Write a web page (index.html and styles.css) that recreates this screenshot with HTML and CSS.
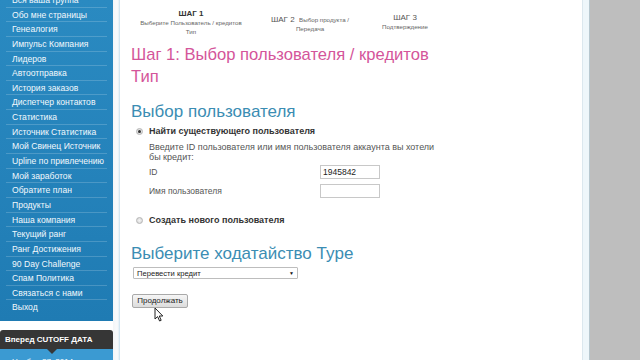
FILE: index.html
```html
<!DOCTYPE html>
<html lang="ru">
<head>
<meta charset="utf-8">
<title>Шаг 1</title>
<link rel="stylesheet" href="styles.css">
</head>
<body>
<div class="page">
  <aside class="side">
    <ul class="menu">
      <li>Вся ваша группа</li>
      <li>Обо мне страницы</li>
      <li>Генеалогия</li>
      <li>Импульс Компания</li>
      <li>Лидеров</li>
      <li>Автоотправка</li>
      <li>История заказов</li>
      <li>Диспетчер контактов</li>
      <li>Статистика</li>
      <li>Источник Статистика</li>
      <li>Мой Свинец Источник</li>
      <li>Upline по привлечению</li>
      <li>Мой заработок</li>
      <li>Обратите план</li>
      <li>Продукты</li>
      <li>Наша компания</li>
      <li>Текущий ранг</li>
      <li>Ранг Достижения</li>
      <li>90 Day Challenge</li>
      <li>Спам Политика</li>
      <li>Связаться с нами</li>
      <li class="last">Выход</li>
    </ul>
    <div class="cutoff">
      <div class="cutoff-head">Вперед CUTOFF ДАТА</div>
      <div class="cutoff-body">Ноябрь 27, 2014</div>
    </div>
  </aside>
  <div class="gutter"></div>
  <main class="main">
    <div class="steps">
      <div class="step step1">
        <div class="step-title">ШАГ 1</div>
        <div class="step-sub">Выберите Пользователь / кредитов<br>Тип</div>
      </div>
      <div class="step step2">
        <div class="step-line"><span class="step-num">ШАГ 2</span> <span class="step-sub">Выбор продукта /</span></div>
        <div class="step-sub">Передача</div>
      </div>
      <div class="step step3">
        <div class="step-num">ШАГ 3</div>
        <div class="step-sub">Подтверждение</div>
      </div>
    </div>

    <h1 class="title">Шаг 1: Выбор пользователя / кредитов<br>Тип</h1>

    <h2 class="section">Выбор пользователя</h2>
    <div class="radio-row">
      <span class="radio checked"></span>
      <span class="radio-label">Найти существующего пользователя</span>
    </div>
    <div class="sub-block">
      <p class="hint">Введите ID пользователя или имя пользователя аккаунта вы хотели<br>бы кредит:</p>
      <div class="field">
        <span class="field-label">ID</span>
        <span class="input">1945842</span>
      </div>
      <div class="field">
        <span class="field-label">Имя пользователя</span>
        <span class="input"></span>
      </div>
    </div>
    <div class="radio-row second">
      <span class="radio"></span>
      <span class="radio-label">Создать нового пользователя</span>
    </div>

    <h2 class="section section2">Выберите ходатайство Type</h2>
    <div class="select"><span>Перевести кредит</span><span class="arrow">▼</span></div>
    <div class="btn">Продолжать</div>

    <svg class="cursor" width="10" height="15" viewBox="0 0 10 15">
      <path d="M1 1 L1 12 L3.6 9.6 L5.6 14 L7.2 13.3 L5.3 9 L8.8 9 Z" fill="#fff" stroke="#222" stroke-width="1" stroke-linejoin="round"/>
    </svg>
  </main>
  <div class="edge"></div>
  <div class="rail"></div>
</div>
</body>
</html>
```

FILE: styles.css
```css
* { box-sizing: border-box; }
html, body { margin: 0; padding: 0; }
body {
  width: 640px;
  height: 360px;
  overflow: hidden;
  background: #fff;
  font-family: "Liberation Sans", Arial, sans-serif;
}
.page {
  display: flex;
  height: 360px;
}
.side {
  width: 113px;
  flex: none;
  display: flex;
  flex-direction: column;
  overflow: hidden;
}
.menu {
  flex: none;
  list-style: none;
  margin: 0;
  padding: 0 6px 0 6px;
  height: 321px;
  background: linear-gradient(180deg, #2a8ac1 0%, #2583bb 50%, #1f7bb3 100%);
  overflow: hidden;
}
.menu li {
  height: 14.65px;
  line-height: 14px;
  font-size: 8.6px;
  color: #f2f8fc;
  padding-left: 6px;
  border-bottom: 1px solid rgba(255,255,255,0.18);
  white-space: nowrap;
}
.menu li:first-child { margin-top: -7px; }
.menu li.last { border-bottom: none; }
.cutoff {
  flex: none;
  margin-top: 9px;
  display: flex;
  flex-direction: column;
}
.cutoff-head {
  position: relative;
  height: 19px;
  line-height: 19px;
  background: #363636;
  border-radius: 3px 3px 0 0;
  color: #fff;
  font-size: 8px;
  font-weight: bold;
  padding-left: 5px;
}
.cutoff-head::after {
  content: "";
  position: absolute;
  left: 47px;
  bottom: -5px;
  border-left: 5px solid transparent;
  border-right: 5px solid transparent;
  border-top: 5px solid #363636;
}
.cutoff-body {
  height: 30px;
  background: #3b9ad2;
  color: #fff;
  font-size: 8px;
  padding: 8px 0 0 12px;
}
.gutter {
  width: 7px;
  flex: none;
  background: linear-gradient(90deg, #f3f6f8, #fafbfc 70%, #e3eff6);
  border-right: 1px solid #d4e6f1;
}
.main {
  position: relative;
  width: 462px;
  flex: none;
  padding: 0 0 0 11px;
  color: #444;
}
.steps {
  display: flex;
  align-items: center;
  height: 44px;
  text-align: center;
  color: #555;
}
.step1 { width: 120px; }
.step2 { width: 118px; }
.step3 { width: 72px; }
.step-title {
  font-size: 8px;
  font-weight: bold;
  color: #333;
  line-height: 9px;
}
.step-num {
  font-size: 8px;
  line-height: 9px;
  color: #555;
}
.step-sub {
  font-size: 6.2px;
  line-height: 9px;
  color: #666;
}
.step-line { line-height: 9px; }
.title {
  margin: 0;
  font-weight: normal;
  font-size: 16.6px;
  line-height: 22px;
  color: #d4559a;
}
.section {
  margin: 0;
  margin-top: 13px;
  font-weight: normal;
  font-size: 17px;
  line-height: 22px;
  color: #3b8db3;
}
.radio-row {
  display: flex;
  align-items: center;
  height: 12px;
  margin-top: 2px;
  padding-left: 5px;
}
.radio-row.second { margin-top: 16px; }
.radio {
  width: 7px;
  height: 7px;
  border-radius: 50%;
  background: radial-gradient(circle, #f5f5f5 0%, #d2d2d2 100%);
  border: 1px solid #b5b5b5;
  margin-right: 6px;
  position: relative;
}
.radio.checked::after {
  content: "";
  position: absolute;
  left: 1px;
  top: 1px;
  width: 3px;
  height: 3px;
  border-radius: 50%;
  background: #333;
}
.radio-label {
  font-size: 9px;
  font-weight: bold;
  color: #333;
}
.sub-block { padding-left: 18px; }
.hint {
  margin: 5px 0 0 0;
  font-size: 9px;
  line-height: 10px;
  color: #555;
}
.field {
  display: flex;
  align-items: center;
  height: 14px;
  margin-top: 3px;
}
.field + .field { margin-top: 5px; }
.field-label {
  width: 171px;
  font-size: 8.5px;
  color: #555;
}
.input {
  width: 60px;
  height: 14px;
  border: 1px solid #c8c8c8;
  font-size: 8.5px;
  line-height: 12px;
  padding-left: 2px;
  color: #222;
}
.section2 { margin-top: 17px; }
.select {
  display: flex;
  justify-content: space-between;
  align-items: center;
  width: 165px;
  height: 12px;
  margin: 2px 0 0 2px;
  border: 1px solid #bdbdbd;
  border-radius: 1px;
  font-size: 7.6px;
  color: #222;
  padding: 0 3px;
}
.arrow { font-size: 5px; color: #111; }
.btn {
  display: inline-block;
  margin: 15px 0 0 1px;
  width: 56px;
  height: 14px;
  border: 1px solid #a9a9a9;
  border-radius: 2px;
  background: linear-gradient(180deg, #f6f6f6, #dcdcdc);
  font-size: 8px;
  line-height: 12px;
  text-align: center;
  color: #222;
}
.cursor {
  position: absolute;
  left: 34px;
  top: 307px;
}
.edge {
  width: 8px;
  flex: none;
  background: #eef6fa;
  border-left: 1px solid #dbe7ee;
  border-right: 1px solid #b7c7cf;
}
.rail {
  flex: 1;
  background: #bebebe;
}
```
